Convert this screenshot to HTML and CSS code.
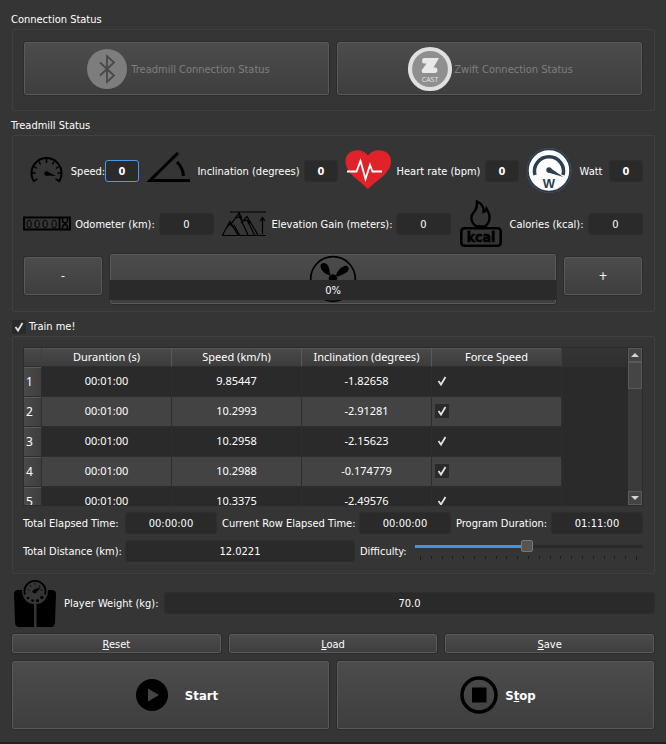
FILE: index.html
```html
<!DOCTYPE html>
<html lang="en">
<head>
<meta charset="utf-8">
<title>Treadmill</title>
<link rel="stylesheet" href="styles.css">
</head>
<body>
<main class="app">
  <section>
    <h2 class="title">Connection Status</h2>
    <div class="group connection">
      <button class="btn tall" disabled>
        <svg class="icon" viewBox="0 0 48 48"><circle cx="24" cy="24" r="20" fill="#7d7d7d"/><path d="M17 17.500 31 30.500 24 37V11l7 6.500L17 30.500" fill="none" stroke="#484848" stroke-width="1.800"/></svg>
        <span>Treadmill Connection Status</span>
      </button>
      <button class="btn tall" disabled>
        <svg class="icon" viewBox="0 0 48 48"><circle cx="24" cy="24" r="20" fill="#8f8f8f" stroke="#e0e0e0" stroke-width="4.200"/><path d="M18 13H33L27.500 22.500H29.500q2 0 2 2.700t-2 2.800H16.500l-1-2.500 5-7H18q-2 0-2-2.700t2-2.800z" fill="#e8e8e8"/><text x="24" y="36.500" text-anchor="middle" class="cast">CAST</text></svg>
        <span>Zwift Connection Status</span>
      </button>
    </div>
  </section>

  <section>
    <h2 class="title">Treadmill Status</h2>
    <div class="group status">
      <div class="metrics first">
        <div class="metric">
          <svg class="icon" viewBox="0 0 48 48"><path d="M11.500 35A15 15 0 1 1 35.500 35" fill="none" stroke="#000" stroke-width="2"/><path d="M23.500 12v4M16 14.500l1.500 3M31 14.500l-1.500 3M11 19.500l3 2M36 19.500l-3 2M9 26h3.500M38 26h-3.500M10.500 34l4-2M36.500 34l-4-2" stroke="#000" stroke-width="1.500"/><circle cx="23.500" cy="26.500" r="2.200"/><path d="M24 24.500 33 29l-9-.5z"/></svg>
          <label for="speed">Speed:</label>
          <input id="speed" class="field strong active" value="0">
        </div>
        <div class="metric">
          <svg class="icon" viewBox="0 0 48 48"><path d="M33 6 5 33.500H45M32 15Q38 21 38.500 29" fill="none" stroke="#000" stroke-width="3"/></svg>
          <label for="incl">Inclination (degrees)</label>
          <input id="incl" class="field strong" value="0">
        </div>
        <div class="metric">
          <svg class="icon" viewBox="0 0 48 48"><path d="M24 42C17 35 1.500 26 1.500 14.500 1.500 2 18 0 24 8.500 30 0 47 2 47 14.500 47 26 31 35 24 42z" fill="#e0232a"/><path d="M3 24.500h9.500L16.500 14l5 18L26 18l2.500 6.500H38" fill="none" stroke="#fff" stroke-width="1.800"/></svg>
          <label for="heart">Heart rate (bpm)</label>
          <input id="heart" class="field strong" value="0">
        </div>
        <div class="metric">
          <svg class="icon" viewBox="0 0 48 48"><circle cx="24" cy="23.500" r="22.500" fill="#435365"/><circle cx="24" cy="23.500" r="21" fill="#fff" stroke="#263a4e" stroke-width="1.500"/><path d="M10 28A14.500 14.500 0 1 1 38 28" fill="none" stroke="#2c3e50" stroke-width="3.500"/><circle cx="24" cy="23" r="2.700" fill="#2c3e50"/><path d="M24.500 20.500 38.500 30 23 25.500z" fill="#2c3e50"/><text x="24" y="40.500" text-anchor="middle" class="watt">W</text></svg>
          <label for="watt">Watt</label>
          <input id="watt" class="field strong" value="0">
        </div>
      </div>
      <div class="metrics second">
        <div class="metric">
          <svg class="icon" viewBox="0 0 48 48"><path d="M1 17.500h46v12H1zM36.500 17v13" fill="none" stroke="#000" stroke-width="1.800"/><text x="3 11 19 28" y="27.500" class="digits">0000</text><path d="M39.500 18v2q0 3 2.500 3t2.500-3v-2M39.500 29v-1.500q0-3 2.500-3t2.500 3V29" fill="none" stroke="#000" stroke-width="1.500"/></svg>
          <label for="odo">Odometer (km):</label>
          <input id="odo" class="field" value="0">
        </div>
        <div class="metric">
          <svg class="icon" viewBox="0 0 48 48"><path d="M10 12h36M2 35.500h44M2.500 35 10 21.500 18 35M11.500 23.500 19 13l3 5.500M21 23l6-6.500L38 35M14 25l5.500 10M19 15l9 20M27 20l7.500 15M42.500 34V18M40 21l2.500-3.500L45 21M7 27l3-3 3 3M16 18l3-1 3 3M24 21l3-1 3 3" fill="none" stroke="#000" stroke-width="1.200"/></svg>
          <label for="gain">Elevation Gain (meters):</label>
          <input id="gain" class="field" value="0">
        </div>
        <div class="metric">
          <svg class="icon" viewBox="0 0 48 48"><path d="M20 26.500C12 22 14 15 17 12c3-3 3-6 3-10.500 5 2 7 6 6.500 10.500 2-.5 2.500-2 3-3.500 3 5 6 12-1.500 18z" fill="none" stroke="#000" stroke-width="2.400"/><rect x="4.300" y="28.300" width="39.400" height="17.400" rx="3" fill="none" stroke="#000" stroke-width="2.600"/><text x="24" y="42" text-anchor="middle" class="kcal">kcal</text></svg>
          <label for="cal">Calories (kcal):</label>
          <input id="cal" class="field" value="0">
        </div>
      </div>
      <div class="fan">
        <button class="btn step">-</button>
        <div class="fan-speed">
          <button class="btn" aria-label="Fan"><svg class="icon" viewBox="0 0 48 48"><circle cx="24" cy="24" r="22.300" fill="none" stroke="#000" stroke-width="1.700"/><circle cx="24" cy="23.500" r="4.300"/><path d="M21.500 20.500C16 20 11 14 11.500 10.500 12 7 17 7 19 10.500c1.500 3 1.500 6 2.500 10zM27 20c2-5 5-8 8.500-9 4-1 5.500 3 3 5.500-3 2.500-7 4-10.500 5zM22 27c-3 5-3 11 0 13 4 2 6-2 5-6z"/></svg></button>
          <div class="progress" role="progressbar" aria-valuenow="0">0%</div>
        </div>
        <button class="btn step">+</button>
      </div>
    </div>
  </section>

  <section>
    <div class="title train"><input type="checkbox" id="train" class="check" checked><label for="train">Train me!</label></div>
    <div class="group program">
      <div class="frame">
        <div class="viewport">
          <table>
            <thead><tr><th class="num"></th><th>Durantion (s)</th><th>Speed (km/h)</th><th>Inclination (degrees)</th><th>Force Speed</th></tr></thead>
            <tbody>
              <tr><th>1</th><td>00:01:00</td><td>9.85447</td><td>-1.82658</td><td class="force"><input type="checkbox" class="check" aria-label="Force speed 1" checked></td></tr>
              <tr><th>2</th><td>00:01:00</td><td>10.2993</td><td>-2.91281</td><td class="force"><input type="checkbox" class="check" aria-label="Force speed 2" checked></td></tr>
              <tr><th>3</th><td>00:01:00</td><td>10.2958</td><td>-2.15623</td><td class="force"><input type="checkbox" class="check" aria-label="Force speed 3" checked></td></tr>
              <tr><th>4</th><td>00:01:00</td><td>10.2988</td><td>-0.174779</td><td class="force"><input type="checkbox" class="check" aria-label="Force speed 4" checked></td></tr>
              <tr><th>5</th><td>00:01:00</td><td>10.3375</td><td>-2.49576</td><td class="force"><input type="checkbox" class="check" aria-label="Force speed 5" checked></td></tr>
            </tbody>
          </table>
        </div>
        <div class="scrollbar">
          <button class="arrow" aria-label="Scroll up"><svg viewBox="0 0 8 4"><path d="M0 4 4 0l4 4z"/></svg></button>
          <div class="thumb"></div>
          <button class="arrow down" aria-label="Scroll down"><svg viewBox="0 0 8 4"><path d="M0 0h8L4 4z"/></svg></button>
        </div>
      </div>
      <div class="line times">
        <label for="total">Total Elapsed Time:</label><input id="total" class="field" value="00:00:00">
        <label for="row">Current Row Elapsed Time:</label><input id="row" class="field" value="00:00:00">
        <label for="dur">Program Duration:</label><input id="dur" class="field" value="01:11:00">
      </div>
      <div class="line distance">
        <label for="dist">Total Distance (km):</label><input id="dist" class="field" value="12.0221">
        <label for="diff">Difficulty:</label>
        <div class="slider">
          <input type="range" id="diff" min="0" max="100" value="49">
          <div class="ticks"><i></i><i></i><i></i><i></i><i></i><i></i><i></i><i></i><i></i><i></i><i></i><i></i><i></i><i></i><i></i><i></i><i></i><i></i><i></i><i></i><i></i></div>
        </div>
      </div>
    </div>
  </section>

  <div class="weight">
    <svg class="icon" viewBox="0 0 48 48"><path d="M7 11h4c0 8 5 14 12 14v23H8q-3.500 0-4-4L3 15q0-4 4-4zM41 11h-4c0 8-5 14-11.500 14v23H40q3.500 0 4-4l1-29q0-4-4-4z"/><path d="M14 15.500A10.500 10.500 0 1 1 34 15.500" fill="none" stroke="#000" stroke-width="1.800"/><path d="M16.500 10.500l2 1M19 6l1 2M24 4v2M29 6l-1 2M31.500 10.500l-2 1" stroke="#000" stroke-width=".8"/><circle cx="23.500" cy="12.500" r="2"/><path d="M23 10.500 30 8l-5 6z"/><circle cx="17" cy="19" r="1.200"/><circle cx="21.500" cy="21.500" r="1.300"/><circle cx="26.500" cy="21.500" r="1.500"/><circle cx="31" cy="18.500" r="1.800"/></svg>
    <label for="weight">Player Weight (kg):</label>
    <input id="weight" class="field" value="70.0">
  </div>
  <div class="actions">
    <button class="btn"><span><u>R</u>eset</span></button>
    <button class="btn"><span><u>L</u>oad</span></button>
    <button class="btn"><span><u>S</u>ave</span></button>
  </div>
  <div class="actions run">
    <button class="btn">
      <svg class="icon wide" viewBox="0 0 60 48"><circle cx="29" cy="24" r="16"/><path d="M25 17.500v13L36 24z" fill="#444"/></svg>
      <span>Start</span>
    </button>
    <button class="btn">
      <svg class="icon" viewBox="0 0 48 48"><circle cx="24" cy="24" r="17" fill="none" stroke="#000" stroke-width="3.500"/><path d="M17 16.500h14.500v15H17z"/></svg>
      <span>S<u>t</u>op</span>
    </button>
  </div>
</main>
</body>
</html>
```
FILE: styles.css
```css
* { box-sizing: border-box; }
body {
  margin: 0;
  background: #353535;
  color: #fff;
  font: 11px/18px "DejaVu Sans Condensed", "DejaVu Sans", sans-serif;
}
button, input { font: inherit; color: inherit; margin: 0; }
label { white-space: nowrap; padding-top: 1px; }
.app { min-height: 100vh; padding: 10px 11px 0; border-bottom: 2px solid #231f22; }
section { margin-bottom: 5px; }
.title { margin: 0; padding-top: 1px; font-size: 11px; font-weight: normal; line-height: 18px; }
.train { display: flex; align-items: center; height: 19px; gap: 3px; padding: 0 0 0 1px; }
.group { margin-left: 1px; border: 1px solid #404040; border-radius: 2px; }
.icon { width: 48px; height: 48px; flex: none; display: block; }
.icon.wide { width: 60px; }

.btn {
  display: flex;
  align-items: center;
  justify-content: center;
  padding: 0;
  border: 1px solid #2c2c2c;
  border-radius: 3px;
  background: linear-gradient(#4c4c4c, #3e3e3e);
  box-shadow: inset 0 0 0 1px #5a5a5a;
  line-height: 18px;
}
.btn span { padding-top: 2px; }
.btn:disabled { color: #7f7f7f; }
.field {
  width: 34px;
  height: 22px;
  min-width: 0;
  padding: 1px 0 0;
  border: 1px solid #2e2e2e;
  border-radius: 3px;
  background: #2a2a2a;
  text-align: center;
  outline: none;
}
.field.strong { font-weight: bold; }
.field.active { border-color: #4a9aeb; }

.connection { display: grid; grid-template-columns: 1fr 1fr; gap: 6px; padding: 11px 11px 14px 10px; }
.tall { height: 55px; }

.status { display: grid; gap: 5px; padding: 11px 11px 6px 10px; }
.metrics { display: grid; gap: 6px; }
.first { grid-template-columns: 116fr 193fr 175fr 118fr; }
.second { grid-template-columns: 191fr 231fr 186fr; }
.metric { display: flex; align-items: center; min-width: 0; }
.metric label { flex: 1 1 0; min-width: 0; display: flex; justify-content: center; }
.second .field { width: 55px; }
.fan { display: grid; grid-template-columns: 80fr 448fr 80fr; gap: 6px; align-items: start; }
.step { height: 40px; margin-top: 3px; font-size: 12px; }
.fan-speed { position: relative; }
.fan-speed .btn { width: 100%; height: 52px; overflow: hidden; }
.progress { position: absolute; left: 1px; right: 1px; top: 27px; height: 20px; background: #2a2a2a; text-align: center; line-height: 22px; }

.check {
  appearance: none;
  display: block;
  width: 14px;
  height: 14px;
  background: #2a2a2a url('data:image/svg+xml,<svg xmlns="http://www.w3.org/2000/svg" viewBox="0 0 14 14"><path d="M3.500 7 6 10.500 10.500 3" fill="none" stroke="%23e2e2e2" stroke-width="1.800"/></svg>');
}

.program { display: grid; gap: 6px; padding: 10px 11px 11px 10px; }
.frame { display: flex; height: 159px; border: 1px solid #2b2b2b; background: #2a2a2a; overflow: hidden; }
.viewport { flex: 1; min-width: 0; overflow: hidden; background: linear-gradient(#343434, #303030) 0 0 / 100% 19px no-repeat; }
table { width: 538px; table-layout: fixed; border-collapse: separate; border-spacing: 0; font: 11px/18px "Noto Sans", sans-serif; }
th, td { padding: 0; border: 0 solid #2e2e2e; border-width: 0 1px 1px 0; text-align: center; font-weight: normal; }
thead th { height: 19px; background: linear-gradient(#4a4a4a, #3c3c3c); border-right-color: #595959; box-shadow: inset 0 1px #555; }
thead th:last-child, thead .num { border-right-color: #3f3f3f; }
.num { width: 18px; }
tbody tr { height: 30px; }
tbody td { padding-bottom: 1px; }
tbody th { background: linear-gradient(90deg, #4a4a4a, #3e3e3e); box-shadow: inset 0 1px #5a5a5a; text-align: left; padding-left: 2px; padding-top: 1px; font-size: 12px; }
tbody tr:nth-child(even) td { background: #434343; }
.force { padding-left: 3px; }
.scrollbar { display: flex; flex-direction: column; width: 15px; border-left: 1px solid #2b2b2b; background: #3b3b3b; }
.arrow { display: flex; align-items: center; justify-content: center; height: 14px; padding: 0; border: 1px solid #5a5a5a; background: #444; }
.arrow svg { width: 8px; height: 4px; fill: #d4d4d4; }
.thumb { height: 27px; border: 1px solid #5a5a5a; background: #454545; }
.down { margin-top: auto; }

.line { display: grid; align-items: center; }
.times { grid-template-columns: 102fr 92fr 142fr 92fr 100fr 92fr; }
.times .field, .distance .field { width: 100%; }
.times label:not(:first-child), .distance label:not(:first-child) { padding-left: 5px; }
.distance { grid-template-columns: 102fr 230fr 60fr 228fr; }
.slider { align-self: start; }
#diff { display: block; width: 100%; height: 12px; appearance: none; background: linear-gradient(90deg, #4495e8 49%, #2a2a2a 49%) 0 5px / 100% 3px no-repeat; }
#diff::-webkit-slider-thumb { appearance: none; width: 12px; height: 12px; border: 1px solid #777; border-radius: 2px; background: #555; }
.ticks { display: flex; justify-content: space-between; padding: 4px 6px 0 5px; }
.ticks i { width: 1px; height: 3px; background: #1c1c1c; }
.ticks i:first-child, .ticks i:last-child { height: 4px; }

.weight { display: flex; align-items: center; }
.weight label { flex: none; padding-left: 5px; width: 105px; }
.weight .field { flex: 1; }
.actions { display: grid; grid-template-columns: repeat(3, 1fr); gap: 6px; margin-top: 6px; }
.actions .btn { height: 21px; }
.run { grid-template-columns: 1fr 1fr; }
.run .btn { height: 70px; gap: 2px; font-size: 13px; font-weight: bold; }

.cast { font: 7px "Open Sans", sans-serif; fill: #e4e4e4; }
.watt { font: bold 13px "Liberation Sans", sans-serif; fill: #2c3e50; }
.digits { font: 11px "Liberation Sans", sans-serif; }
.kcal { font: bold 14px "DejaVu Sans Condensed", sans-serif; stroke: #000; stroke-width: .5; }
```
